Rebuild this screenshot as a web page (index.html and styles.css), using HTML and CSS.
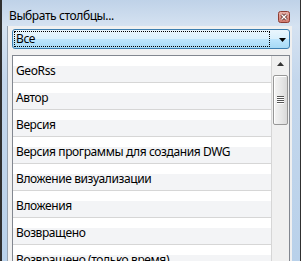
FILE: index.html
```html
<!DOCTYPE html>
<html lang="ru">
<head>
    <meta charset="UTF-8">
    <title>Выбрать столбцы</title>
    <link rel="stylesheet" href="styles.css">
</head>
<body>
    <div class="window">
        <div class="titlebar">
            <span class="title">Выбрать столбцы...</span>
            <span class="close-btn">
                <svg width="12" height="12" viewBox="0 0 12 12">
                    <defs>
                        <linearGradient id="closeFill" x1="0" y1="0" x2="0" y2="1">
                            <stop offset="0" stop-color="#eab4ac"/>
                            <stop offset="1" stop-color="#d0786c"/>
                        </linearGradient>
                    </defs>
                    <rect x="0.5" y="0.5" width="11" height="11" rx="2" fill="url(#closeFill)" stroke="#8e3c32"/>
                    <path d="M3.5 3.5 L8.5 8.5 M8.5 3.5 L3.5 8.5" stroke="#5b2620" stroke-width="3"/>
                    <path d="M3.5 3.5 L8.5 8.5 M8.5 3.5 L3.5 8.5" stroke="#ffffff" stroke-width="1.4"/>
                </svg>
            </span>
        </div>
        <div class="client">
            <div class="combo">
                <span class="combo-focus">Все</span>
                <svg class="combo-arrow" width="7" height="4" viewBox="0 0 7 4">
                    <polygon points="0,0 7,0 3.5,4" fill="#000"/>
                </svg>
            </div>
            <div class="listbox">
                <ul class="items">
                    <li>GeoRss</li>
                    <li>Автор</li>
                    <li>Версия</li>
                    <li>Версия программы для создания DWG</li>
                    <li>Вложение визуализации</li>
                    <li>Вложения</li>
                    <li>Возвращено</li>
                    <li>Возвращено (только время)</li>
                </ul>
                <div class="scrollbar">
                    <div class="scroll-up">
                        <svg width="7" height="4" viewBox="0 0 7 4">
                            <polygon points="3.5,0 7,4 0,4" fill="#333"/>
                        </svg>
                    </div>
                    <div class="thumb">
                        <div class="grip"></div>
                    </div>
                </div>
            </div>
        </div>
    </div>
</body>
</html>
```

FILE: styles.css
```css
body {
  margin: 0;
  padding: 0;
  font-family: 'Noto Sans', 'Open Sans', sans-serif;
  font-size: 12px;
  letter-spacing: -0.4px;
  color: #000;
  overflow: hidden;
}

.window {
  width: 301px;
  height: 261px;
  box-sizing: border-box;
  display: flex;
  flex-direction: column;
  border-left: 2px solid #303030;
  border-right: 1px solid #303030;
  background: linear-gradient(#bfd2e8 0, #d5e2f1 26px, #c4d7ec 80px, #b9d1ea 100%);
  overflow: hidden;
}

.titlebar {
  display: flex;
  align-items: flex-start;
  height: 26px;
  box-sizing: border-box;
  padding: 8px 0 0 7px;
  flex-shrink: 0;
}

.title {
  line-height: 16px;
}

.close-btn {
  margin-left: auto;
  margin-right: 10px;
  margin-top: 3px;
  width: 12px;
  height: 12px;
}

.close-btn svg {
  display: block;
}

.client {
  flex: 1;
  margin: 0 8px 0 5px;
  padding: 3px 2px 0 4px;
  background: #f0f0f0;
  border-left: 1px solid #98a4b2;
  display: flex;
  flex-direction: column;
  min-height: 0;
}

.combo {
  height: 20px;
  box-sizing: border-box;
  border: 1px solid #3c7fb1;
  border-radius: 3px;
  background: linear-gradient(#eaf6fd 0%, #d9f0fc 50%, #bee6fd 50%, #a7d9f5 100%);
  display: flex;
  align-items: flex-start;
  padding: 1px 0 0 1px;
  flex-shrink: 0;
}

.combo-focus {
  width: 256px;
  height: 16px;
  box-sizing: border-box;
  border: 1px dotted #000;
  padding-left: 1px;
  line-height: 14px;
}

.combo-arrow {
  display: block;
  margin: 7px 0 0 9px;
}

.listbox {
  margin-top: 6px;
  flex: 1;
  min-height: 0;
  border: 1px solid #828790;
  border-bottom: none;
  background: #fff;
  display: flex;
  overflow: hidden;
}

.items {
  list-style: none;
  margin: 0;
  padding: 0;
  width: 259px;
  flex-shrink: 0;
}

.items li {
  height: 27px;
  box-sizing: border-box;
  padding: 7px 0 0 3px;
  line-height: 16px;
  white-space: nowrap;
  border-bottom: 1px solid #d6d6d6;
  border-right: 1px solid #d6d6d6;
  background: linear-gradient(#ffffff 0, #ffffff 10px, #f3f4f6 10px, #f3f4f6 100%);
}

.scrollbar {
  width: 17px;
  flex-shrink: 0;
  background: #f0f0f0;
  display: flex;
  flex-direction: column;
}

.scroll-up {
  height: 17px;
  padding: 6px 0 0 5px;
  box-sizing: border-box;
}

.scroll-up svg {
  display: block;
}

.thumb {
  margin: 2px 0 0 1px;
  width: 15px;
  height: 50px;
  box-sizing: border-box;
  border: 1px solid #979797;
  border-radius: 2px;
  background: linear-gradient(to right, #f4f4f4, #e6e6e6 60%, #d9d9d9);
  box-shadow: inset 1px 1px 0 #fff;
  display: flex;
  align-items: center;
  justify-content: center;
}

.grip {
  width: 7px;
  height: 8px;
  background: repeating-linear-gradient(#555 0, #555 1px, #fff 1px, #fff 2px);
}
```
